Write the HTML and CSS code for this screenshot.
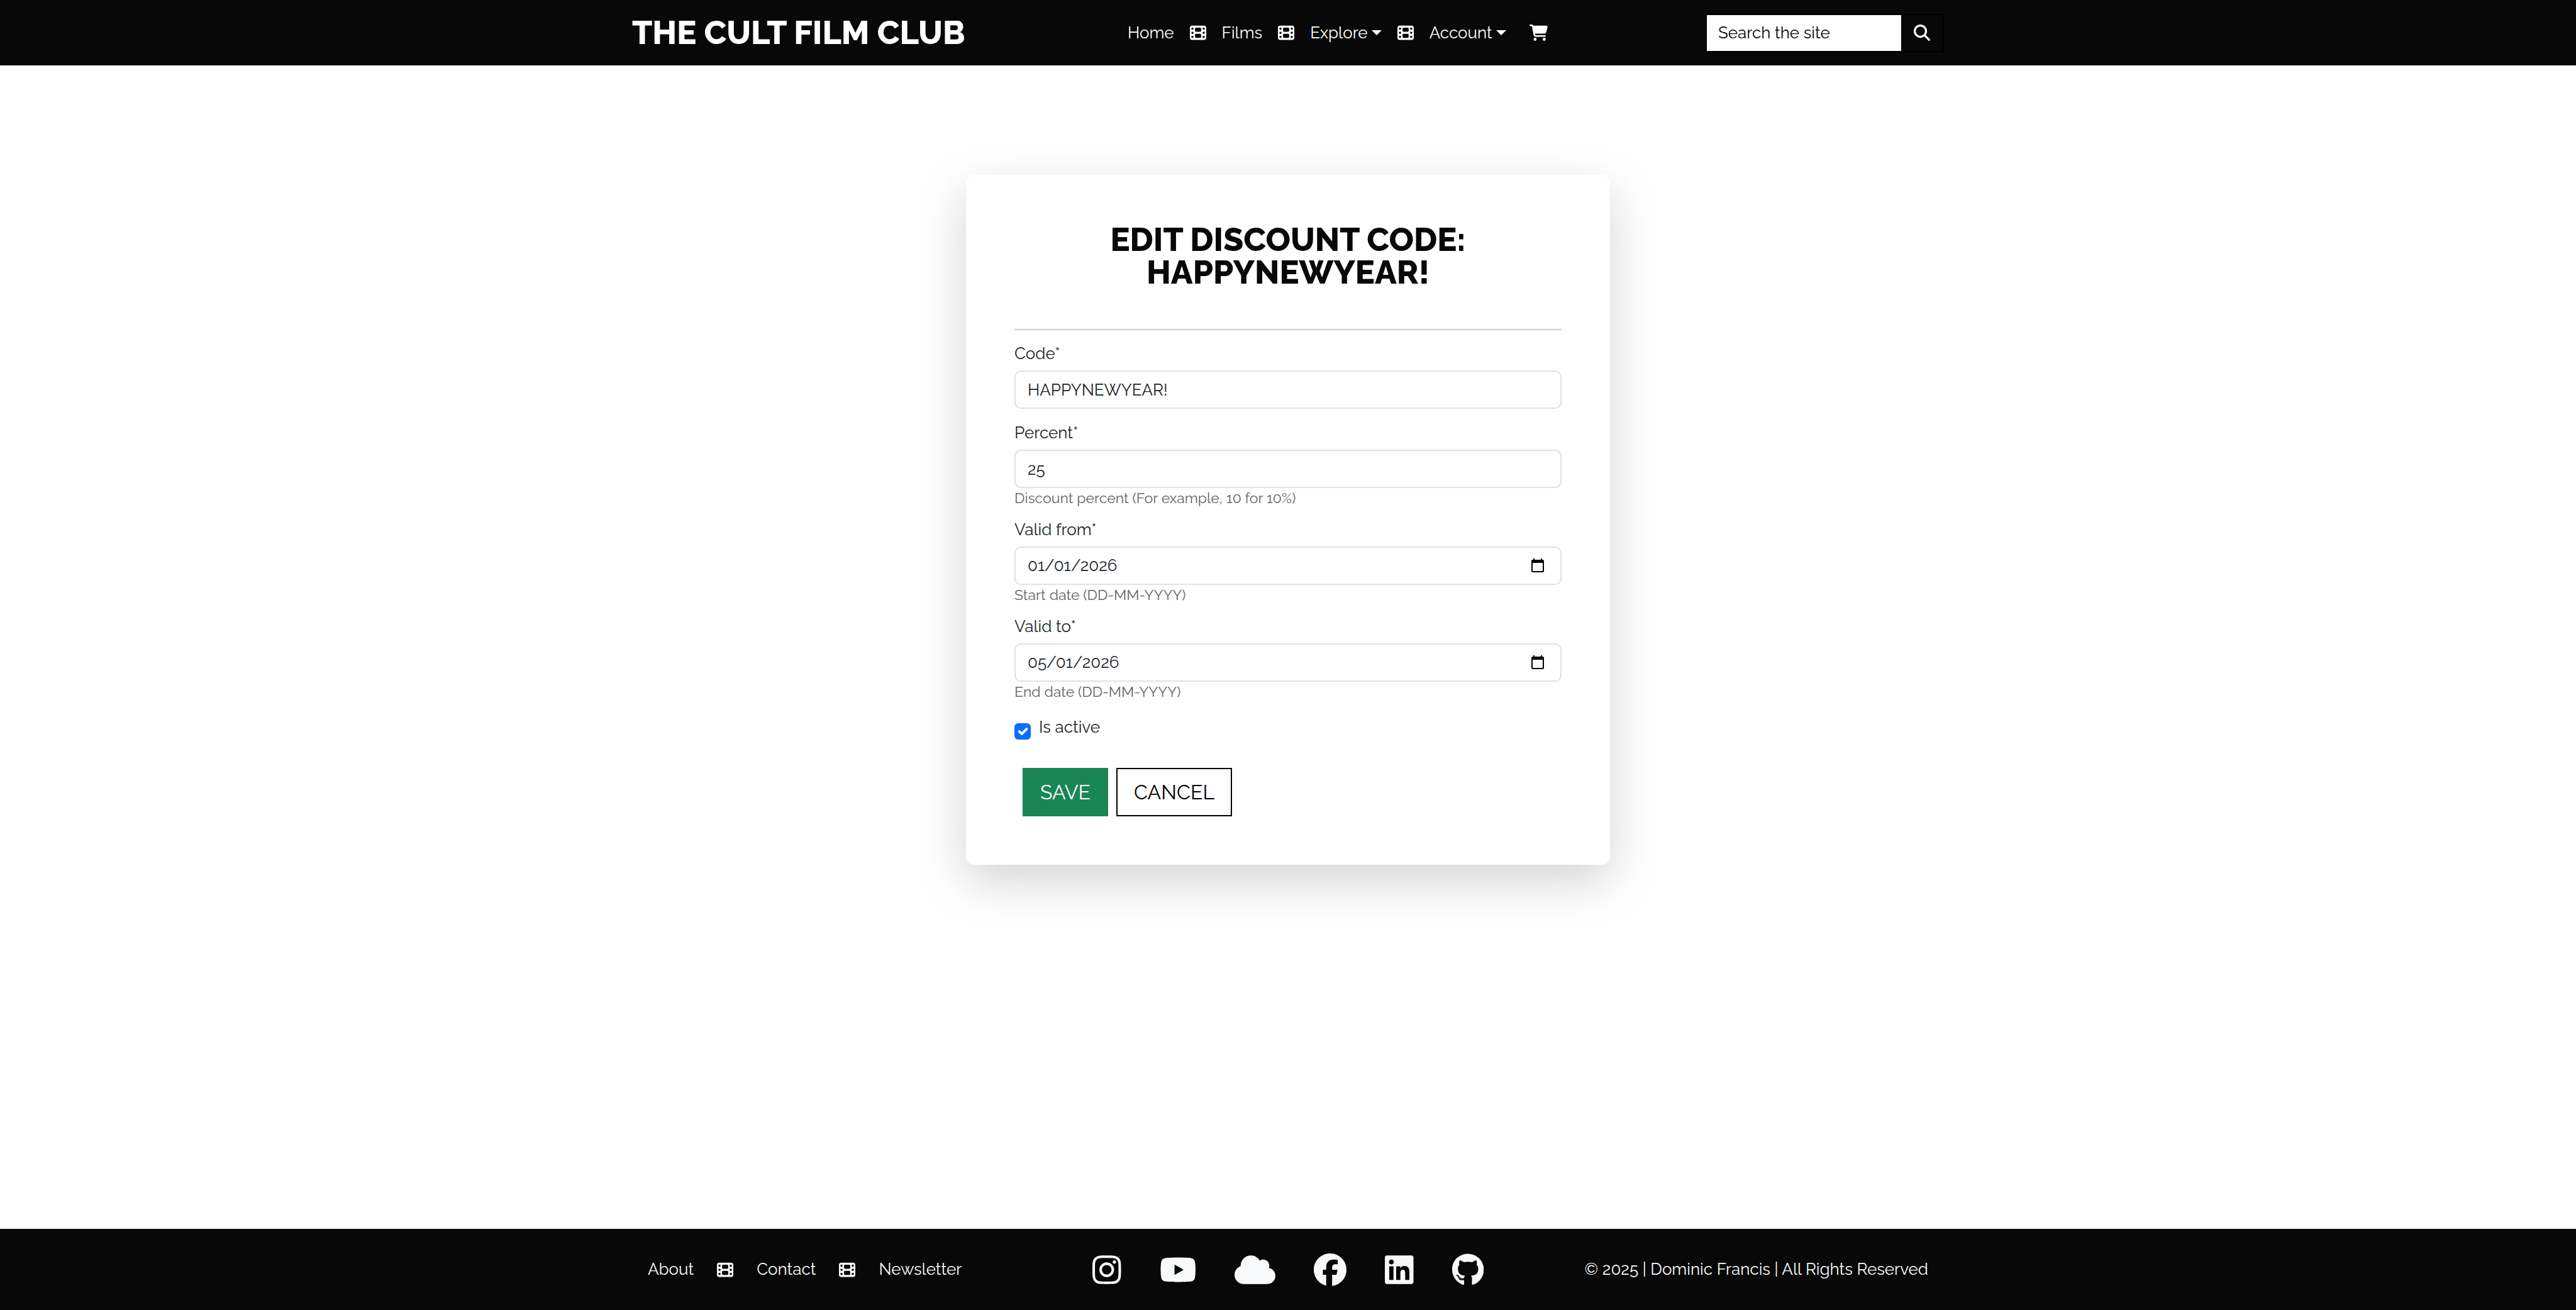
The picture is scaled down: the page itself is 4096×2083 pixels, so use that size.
FILE: index.html
```html
<!DOCTYPE html>
<html lang="en">
<head>
<meta charset="utf-8">
<meta name="viewport" content="width=device-width, initial-scale=1">
<title>The Cult Film Club</title>
<link rel="stylesheet" href="styles.css">
</head>
<body>
<svg class="sprite" aria-hidden="true">
  <symbol id="film" viewBox="0 0 512 512"><path fill-rule="evenodd" d="M0 96C0 60.7 28.7 32 64 32H448c35.3 0 64 28.7 64 64V416c0 35.3-28.7 64-64 64H64c-35.3 0-64-28.7-64-64V96zM48 368v32c0 8.800 7.200 16 16 16H96c8.800 0 16-7.200 16-16V368c0-8.800-7.200-16-16-16H64c-8.800 0-16 7.200-16 16zm368-16c-8.800 0-16 7.200-16 16v32c0 8.800 7.200 16 16 16h32c8.800 0 16-7.200 16-16V368c0-8.800-7.200-16-16-16H416zM48 240v32c0 8.800 7.200 16 16 16H96c8.800 0 16-7.200 16-16V240c0-8.800-7.200-16-16-16H64c-8.800 0-16 7.200-16 16zm368-16c-8.800 0-16 7.200-16 16v32c0 8.800 7.200 16 16 16h32c8.800 0 16-7.200 16-16V240c0-8.800-7.200-16-16-16H416zM48 112v32c0 8.800 7.200 16 16 16H96c8.800 0 16-7.200 16-16V112c0-8.800-7.200-16-16-16H64c-8.800 0-16 7.200-16 16zM416 96c-8.800 0-16 7.200-16 16v32c0 8.800 7.200 16 16 16h32c8.800 0 16-7.200 16-16V112c0-8.800-7.200-16-16-16H416zM160 128v64c0 17.700 14.300 32 32 32H320c17.700 0 32-14.300 32-32V128c0-17.700-14.300-32-32-32H192c-17.700 0-32 14.300-32 32zm32 160c-17.700 0-32 14.300-32 32v64c0 17.700 14.300 32 32 32H320c17.700 0 32-14.300 32-32V320c0-17.700-14.300-32-32-32H192z"/></symbol>
</svg>

<header class="site-header">
  <div class="container header-row">
    <a class="brand" href="#">THE CULT FILM CLUB</a>
    <nav class="main-nav" aria-label="Main">
      <a href="#">Home</a>
      <svg class="icon" aria-hidden="true"><use href="#film"/></svg>
      <a href="#">Films</a>
      <svg class="icon" aria-hidden="true"><use href="#film"/></svg>
      <a class="dropdown" href="#">Explore</a>
      <svg class="icon" aria-hidden="true"><use href="#film"/></svg>
      <a class="dropdown" href="#">Account</a>
      <a class="cart" href="#" aria-label="Cart"><svg viewBox="0 0 576 512"><path d="M0 24C0 10.700 10.700 0 24 0H69.500c22 0 41.500 12.800 50.600 32h411c26.300 0 45.500 25 38.600 50.400l-41 152.300c-8.500 31.400-37 53.300-69.500 53.300H170.700l5.400 28.500c2.200 11.300 12.100 19.500 23.600 19.500H488c13.300 0 24 10.700 24 24s-10.700 24-24 24H199.700c-34.600 0-64.300-24.600-70.700-58.500L77.400 54.500c-.7-3.800-4-6.500-7.900-6.500H24C10.700 48 0 37.300 0 24zM128 464a48 48 0 1 1 96 0 48 48 0 1 1 -96 0zm336-48a48 48 0 1 1 0 96 48 48 0 1 1 0-96z"/></svg></a>
    </nav>
    <form class="search" role="search">
      <input type="text" placeholder="Search the site" aria-label="Search the site">
      <button type="button" aria-label="Search"><svg viewBox="0 0 512 512"><path d="M416 208c0 45.900-14.900 88.300-40 122.700L502.600 457.400c12.500 12.500 12.500 32.800 0 45.300s-32.800 12.500-45.300 0L330.700 376c-34.400 25.200-76.800 40-122.700 40C93.100 416 0 322.900 0 208S93.100 0 208 0S416 93.100 416 208zM208 352a144 144 0 1 0 0-288 144 144 0 1 0 0 288z"/></svg></button>
    </form>
  </div>
</header>

<main>
  <section class="card">
    <h1>EDIT DISCOUNT CODE: HAPPYNEWYEAR!</h1>
    <hr>
    <form>
      <div class="field">
        <label for="code">Code*</label>
        <input id="code" type="text" value="HAPPYNEWYEAR!">
      </div>
      <div class="field">
        <label for="percent">Percent*</label>
        <input id="percent" type="text" inputmode="numeric" value="25">
        <p class="help">Discount percent (For example, 10 for 10%)</p>
      </div>
      <div class="field">
        <label for="from">Valid from*</label>
        <input id="from" type="date" value="2026-01-01">
        <p class="help">Start date (DD-MM-YYYY)</p>
      </div>
      <div class="field">
        <label for="to">Valid to*</label>
        <input id="to" type="date" value="2026-05-01">
        <p class="help">End date (DD-MM-YYYY)</p>
      </div>
      <div class="check">
        <input id="active" type="checkbox" checked>
        <label for="active">Is active</label>
      </div>
      <div class="actions">
        <button class="btn save" type="button">SAVE</button>
        <a class="btn cancel" href="#">CANCEL</a>
      </div>
    </form>
  </section>
</main>

<footer class="site-footer">
  <div class="container footer-row">
    <nav class="footer-nav" aria-label="Footer">
      <a href="#">About</a>
      <svg class="icon" aria-hidden="true"><use href="#film"/></svg>
      <a href="#">Contact</a>
      <svg class="icon" aria-hidden="true"><use href="#film"/></svg>
      <a href="#">Newsletter</a>
    </nav>
    <div class="social">
      <a href="#" aria-label="Instagram"><svg viewBox="0 0 448 512"><path d="M224.1 141c-63.600 0-114.900 51.300-114.900 114.900s51.300 114.900 114.900 114.900S339 319.500 339 255.900 287.700 141 224.100 141zm0 189.600c-41.100 0-74.700-33.500-74.700-74.700s33.500-74.700 74.700-74.700 74.700 33.500 74.700 74.700-33.600 74.700-74.700 74.700zm146.400-194.300c0 14.900-12 26.800-26.800 26.800-14.900 0-26.800-12-26.800-26.800s12-26.800 26.800-26.800 26.800 12 26.800 26.800zm76.100 27.200c-1.700-35.900-9.900-67.700-36.200-93.900-26.200-26.200-58-34.400-93.900-36.200-37-2.100-147.900-2.100-184.900 0-35.800 1.700-67.600 9.900-93.900 36.100s-34.400 58-36.200 93.900c-2.100 37-2.100 147.900 0 184.900 1.700 35.900 9.900 67.700 36.200 93.900s58 34.400 93.900 36.200c37 2.100 147.900 2.100 184.900 0 35.900-1.700 67.700-9.900 93.900-36.200 26.200-26.200 34.400-58 36.200-93.900 2.100-37 2.100-147.800 0-184.800zM398.800 388c-7.800 19.600-22.900 34.700-42.600 42.600-29.500 11.700-99.500 9-132.100 9s-102.700 2.600-132.100-9c-19.600-7.800-34.700-22.900-42.600-42.600-11.700-29.500-9-99.500-9-132.100s-2.600-102.700 9-132.100c7.800-19.600 22.900-34.700 42.600-42.600 29.500-11.700 99.500-9 132.100-9s102.700-2.600 132.100 9c19.600 7.800 34.700 22.900 42.600 42.600 11.700 29.500 9 99.500 9 132.100s2.700 102.700-9 132.100z"/></svg></a>
      <a href="#" aria-label="YouTube"><svg viewBox="0 0 576 512"><path d="M549.655 124.083c-6.281-23.650-24.787-42.276-48.284-48.597C458.781 64 288 64 288 64S117.220 64 74.629 75.486c-23.497 6.322-42.003 24.947-48.284 48.597-11.412 42.867-11.412 132.305-11.412 132.305s0 89.438 11.412 132.305c6.281 23.650 24.787 41.500 48.284 47.821C117.220 448 288 448 288 448s170.780 0 213.371-11.486c23.497-6.321 42.003-24.171 48.284-47.821 11.412-42.867 11.412-132.305 11.412-132.305s0-89.438-11.412-132.305zm-317.510 213.508V175.185l142.739 81.205-142.739 81.201z"/></svg></a>
      <a href="#" aria-label="Cloud"><svg viewBox="0 0 640 512"><path d="M0 336c0 79.500 64.500 144 144 144H512c70.700 0 128-57.300 128-128c0-61.900-44-113.600-102.400-125.400c4.100-10.700 6.400-22.400 6.400-34.600c0-53-43-96-96-96c-19.700 0-38.100 6-53.300 16.200C367 64.200 315.300 32 256 32C167.600 32 96 103.600 96 192c0 2.700 .1 5.400 .2 8.100C40.200 219.800 0 273.200 0 336z"/></svg></a>
      <a href="#" aria-label="Facebook"><svg viewBox="0 0 512 512"><path d="M512 256C512 114.600 397.400 0 256 0S0 114.600 0 256C0 376 82.700 476.800 194.200 504.500V334.200H141.400V256h52.800V222.300c0-87.100 39.400-127.500 125-127.500c16.200 0 44.200 3.200 55.700 6.400V172c-6-.6-16.500-1-29.600-1c-42 0-58.200 15.900-58.200 57.200V256h83.600l-14.400 78.200H287V510.100C413.800 494.800 512 386.900 512 256z"/></svg></a>
      <a href="#" aria-label="LinkedIn"><svg viewBox="0 0 448 512"><path d="M416 32H31.900C14.300 32 0 46.500 0 64.300v383.400C0 465.500 14.300 480 31.900 480H416c17.600 0 32-14.500 32-32.300V64.300c0-17.800-14.400-32.300-32-32.300zM135.400 416H69V202.200h66.500V416zm-33.200-243c-21.300 0-38.500-17.300-38.500-38.500S80.900 96 102.200 96c21.200 0 38.500 17.300 38.500 38.500 0 21.300-17.200 38.500-38.500 38.500zm282.100 243h-66.400V312c0-24.800-.5-56.700-34.500-56.700-34.600 0-39.900 27-39.900 54.900V416h-66.400V202.200h63.700v29.200h.9c8.900-16.800 30.600-34.500 62.900-34.500 67.200 0 79.700 44.300 79.700 101.900V416z"/></svg></a>
      <a href="#" aria-label="GitHub"><svg viewBox="0 0 496 512"><path d="M165.900 397.400c0 2-2.300 3.600-5.200 3.600-3.300.3-5.600-1.300-5.600-3.600 0-2 2.300-3.600 5.200-3.600 3-.3 5.600 1.300 5.600 3.600zm-31.100-4.500c-.7 2 1.300 4.300 4.300 4.900 2.600 1 5.600 0 6.200-2s-1.300-4.300-4.300-5.200c-2.600-.7-5.500.3-6.200 2.300zm44.200-1.700c-2.900.7-4.900 2.600-4.600 4.900.3 2 2.900 3.300 5.900 2.600 2.900-.7 4.900-2.600 4.600-4.600-.3-1.900-3-3.200-5.900-2.900zM244.800 8C106.100 8 0 113.300 0 252c0 110.900 69.800 205.800 169.500 239.200 12.800 2.300 17.300-5.600 17.300-12.100 0-6.200-.3-40.400-.3-61.400 0 0-70 15-84.700-29.800 0 0-11.400-29.100-27.800-36.600 0 0-22.900-15.700 1.600-15.400 0 0 24.900 2 38.600 25.800 21.900 38.600 58.600 27.500 72.900 20.900 2.300-16 8.800-27.100 16-33.700-55.900-6.200-112.300-14.300-112.300-110.500 0-27.500 7.600-41.300 23.600-58.900-2.600-6.500-11.100-33.300 2.600-67.900 20.900-6.500 69 27 69 27 20-5.600 41.500-8.500 62.800-8.500s42.800 2.900 62.800 8.500c0 0 48.100-33.600 69-27 13.700 34.700 5.200 61.400 2.600 67.900 16 17.700 25.800 31.500 25.800 58.900 0 96.500-58.900 104.200-114.800 110.500 9.200 7.900 17 22.900 17 46.400 0 33.700-.3 75.400-.3 83.600 0 6.500 4.600 14.400 17.300 12.100C428.200 457.800 496 362.900 496 252 496 113.300 383.500 8 244.800 8zM97.200 352.900c-1.300 1-1 3.300.7 5.200 1.600 1.600 3.900 2.300 5.200 1 1.300-1 1-3.300-.7-5.200-1.600-1.600-3.900-2.300-5.200-1zm-10.800-8.100c-.7 1.300.3 2.900 2.300 3.900 1.600 1 3.600.7 4.300-.7.7-1.300-.3-2.900-2.300-3.900-2-.6-3.600-.3-4.300.7zm32.400 35.600c-1.600 1.300-1 4.300 1.300 6.200 2.300 2.300 5.200 2.600 6.500 1 1.300-1.300.7-4.300-1.300-6.200-2.200-2.300-5.200-2.600-6.500-1zm-11.400-14.700c-1.600 1-1.600 3.600 0 5.900 1.600 2.300 4.300 3.300 5.600 2.300 1.600-1.300 1.600-3.900 0-6.200-1.400-2.300-4-3.300-5.600-2z"/></svg></a>
    </div>
    <p class="copyright">© 2025 | Dominic Francis | All Rights Reserved</p>
  </div>
</footer>
</body>
</html>
```

FILE: styles.css
```css
*, *::before, *::after { box-sizing: border-box; }

body {
  margin: 0;
  min-height: 100vh;
  display: flex;
  flex-direction: column;
  background: #fff;
  color: #212529;
  font-family: Raleway, Lato, sans-serif;
  font-size: 26px;
  line-height: 39px;
}

h1, p, hr { margin: 0; }
a { color: inherit; text-decoration: none; }
input, button { font: inherit; color: inherit; }
svg { display: block; fill: currentColor; }
.sprite { position: absolute; width: 0; height: 0; }
.icon { width: 26px; height: 26px; flex: none; }

.container {
  width: 100%;
  max-width: 2124px;
  margin: 0 auto;
}

/* Header */
.site-header { background: #080808; color: #fff; }
.header-row {
  display: grid;
  grid-template-columns: minmax(0, 788fr) minmax(0, 919fr) minmax(0, 379fr);
  align-items: center;
  min-height: 104px;
  padding: 0 19px;
}
.brand { font-size: 52px; line-height: 52px; font-weight: 800; white-space: nowrap; }
.main-nav { display: flex; align-items: center; gap: 25px; }
.dropdown { display: flex; align-items: center; gap: 6px; }
.dropdown::after {
  content: "";
  border: 8px solid transparent;
  border-top: 8px solid currentColor;
  border-bottom: 0;
}
.cart { margin-left: 12px; }
.cart svg { width: 29px; height: 26px; }
.search { display: flex; height: 61px; border: 2px solid #000; }
.search input {
  flex: 1;
  min-width: 0;
  border: 0;
  border-radius: 0;
  padding: 0 18px;
  background: #fff;
  color: #080808;
}
.search input::placeholder { color: #080808; opacity: 1; }
.search button {
  width: 66px;
  border: 0;
  padding: 0 20px;
  background: #080808;
  color: #fff;
}
.search svg { width: 26px; height: 26px; }

/* Card */
main { padding: 174px 0; }
.card {
  width: 100%;
  max-width: 1024px;
  margin: 0 auto;
  padding: 77px;
  border-radius: 13px;
  background: #fff;
  box-shadow: 0 26px 77px rgba(0, 0, 0, .175);
}
.card h1 {
  max-width: 640px;
  margin: 0 auto;
  color: #080808;
  font-size: 52px;
  line-height: 52px;
  font-weight: 800;
  text-align: center;
}
.card hr { margin: 64px 0 18px; border: 0; border-top: 2px solid #cfcfcf; }

.field { margin-bottom: 19px; }
.field label { display: block; margin-bottom: 7px; }
.field input {
  display: block;
  width: 100%;
  height: 61px;
  padding: 0 21px 0 19px;
  border: 2px solid #dee2e6;
  border-radius: 10px;
  background: #fff;
}
::-webkit-datetime-edit,
::-webkit-datetime-edit-day-field,
::-webkit-datetime-edit-month-field,
::-webkit-datetime-edit-year-field { padding: 0; }
.help { margin-top: 4px; color: #63666a; font-size: 23px; line-height: 24px; }

.check { display: flex; align-items: flex-end; gap: 13px; padding-top: 6px; }
.check input {
  appearance: none;
  width: 26px;
  height: 26px;
  margin: 0;
  border-radius: 6px;
  background: #0d6efd url("data:image/svg+xml,%3csvg xmlns='http://www.w3.org/2000/svg' viewBox='0 0 20 20'%3e%3cpath fill='none' stroke='%23fff' stroke-linecap='round' stroke-linejoin='round' stroke-width='3' d='m6 10 3 3 6-6'/%3e%3c/svg%3e") center / contain no-repeat;
}

.actions { display: flex; gap: 13px; margin: 45px 0 0 13px; }
.btn {
  height: 77px;
  padding: 0 26px;
  border: 2px solid #000;
  background: #fff;
  color: #000;
  font-size: 32px;
  line-height: 73px;
}
.save { border-color: #198754; background: #198754; color: #fff; }

/* Footer */
.site-footer { margin-top: auto; background: #080808; color: #f8f9fa; }
.footer-row {
  display: grid;
  grid-template-columns: 1fr auto 1fr;
  align-items: center;
  min-height: 129px;
  padding: 0 44px;
}
.footer-nav { display: flex; align-items: center; gap: 37px; }
.social { display: flex; gap: 61px; }
.social svg { height: 52px; width: auto; }
.copyright { text-align: right; }
```
